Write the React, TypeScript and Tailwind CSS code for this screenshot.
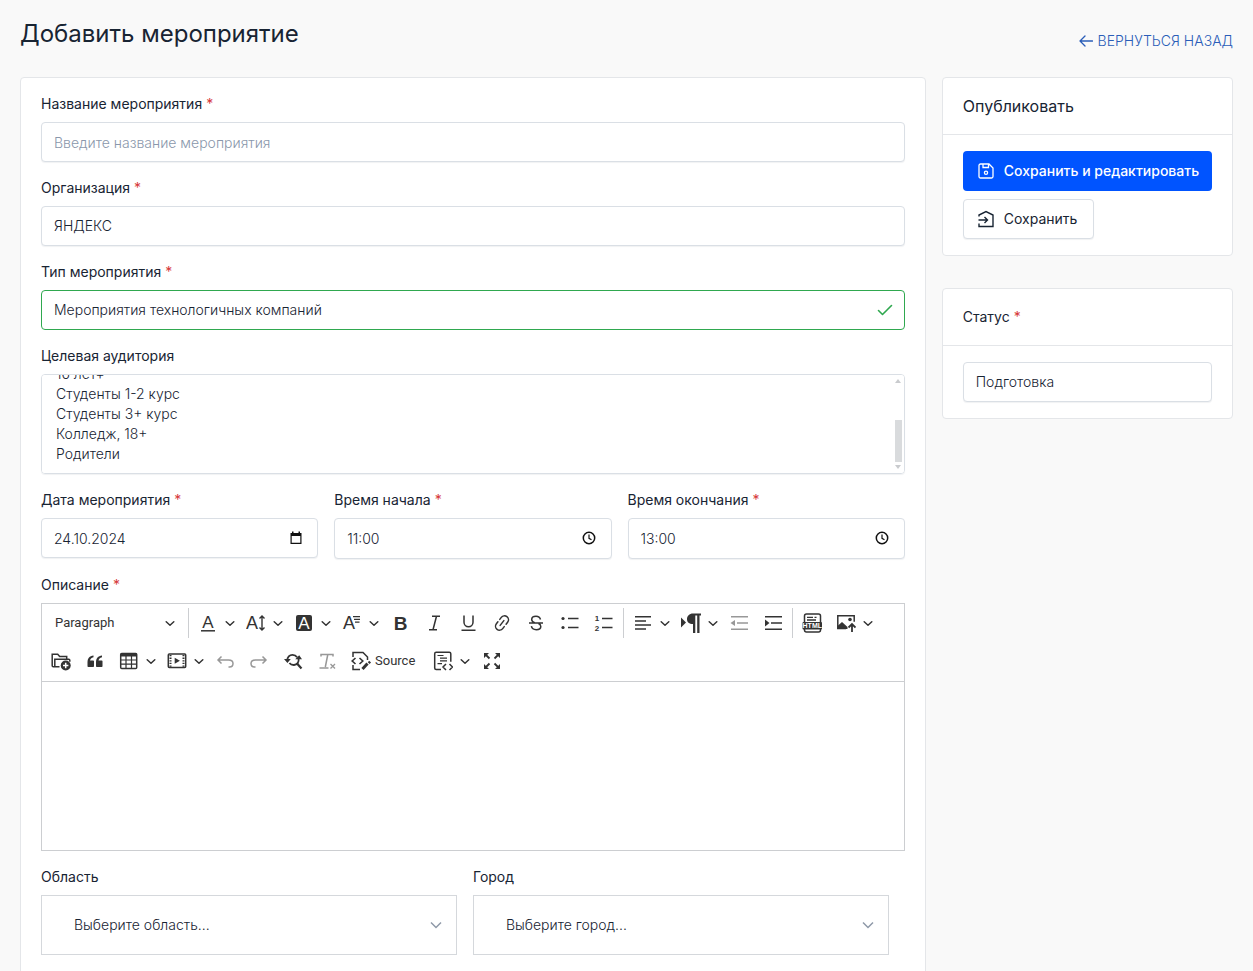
import { useEffect, useRef } from 'react';
import type { ReactNode } from 'react';

const AUDIENCE = [
  '1-4 класс',
  '5-7 класс',
  '8-9 класс',
  '10-11 класс',
  'Колледж, до 18 лет',
  '16 лет+',
  'Студенты 1-2 курс',
  'Студенты 3+ курс',
  'Колледж, 18+',
  'Родители',
];

const field =
  'block w-full appearance-none rounded-[4px] border border-[#dadfe5] bg-white px-3 text-sm font-light text-[#182433] shadow-[0_1px_1px_rgba(24,36,51,0.06)] outline-none placeholder:text-[#8a97ab]';

function Label({ id, required, children }: { id: string; required?: boolean; children: ReactNode }) {
  return (
    <label htmlFor={id} className="mb-2 block text-sm leading-5">
      {children}
      {required && <span className="ml-1 text-[#d63939]">*</span>}
    </label>
  );
}

function Icon({ children }: { children: ReactNode }) {
  return (
    <svg viewBox="0 0 20 20" className="size-5 shrink-0" fill="none" stroke="currentColor" strokeWidth="1.5" aria-hidden>
      {children}
    </svg>
  );
}

function Glyph({ x, y, size, children, fill = 'currentColor', weight = 400 }: { x: number; y: number; size: number; children: string; fill?: string; weight?: number }) {
  return (
    <text x={x} y={y} fontSize={size} fontWeight={weight} fill={fill} stroke="none" textAnchor="middle" fontFamily="Liberation Sans, sans-serif">
      {children}
    </text>
  );
}

function Arrow() {
  return (
    <svg viewBox="0 0 10 10" className="size-[10px] shrink-0" fill="none" stroke="currentColor" strokeWidth="1.5" strokeLinecap="round" strokeLinejoin="round" aria-hidden>
      <path d="M1.2 3.8L5 7.2l3.800-3.400" />
    </svg>
  );
}

function Tool({ name, drop, off, children }: { name: string; drop?: boolean; off?: boolean; children: ReactNode }) {
  return (
    <button
      type="button"
      aria-label={name}
      disabled={off}
      className={`flex h-[30px] items-center gap-0.5 ${drop ? 'w-11' : 'w-[30px]'} ${off ? 'opacity-50' : ''}`}
    >
      <span className="flex w-[30px] shrink-0 justify-center">
        <Icon>{children}</Icon>
      </span>
      {drop && <Arrow />}
    </button>
  );
}

function Divider() {
  return <span className="h-[30px] w-px bg-[#ccced1]" />;
}

function Toolbar() {
  return (
    <div className="flex flex-col gap-2 border-b border-[#ccced1] px-1 pt-1 pb-[5px] text-[#333]">
      <div className="flex gap-1">
        <button type="button" className="flex h-[30px] w-[138px] items-center justify-between px-[9px] font-[Roboto] text-[13px]">
          Paragraph
          <Arrow />
        </button>
        <Divider />
        <Tool name="Font color" drop>
          <Glyph x={10} y={15} size={17}>A</Glyph>
          <path d="M3 17.8h14" />
        </Tool>
        <Tool name="Font size" drop>
          <Glyph x={6} y={16} size={18}>A</Glyph>
          <path d="M16 4v12M13.5 5.5L16 3l2.5 2.5M13.5 14.5L16 17l2.5-2.5" strokeWidth="1.4" />
        </Tool>
        <Tool name="Font background" drop>
          <rect x="2" y="2" width="16" height="16" rx="2" fill="currentColor" stroke="none" />
          <Glyph x={10} y={16} size={17} fill="#fff">A</Glyph>
        </Tool>
        <Tool name="Font family" drop>
          <Glyph x={7} y={16} size={18}>A</Glyph>
          <path d="M11 3.7h7M12 6.4h6M13 9.1h4.5" strokeWidth="1.3" />
        </Tool>
        <Tool name="Bold">
          <Glyph x={10.5} y={17} size={19} weight={700}>B</Glyph>
        </Tool>
        <Tool name="Italic">
          <path d="M8 3.2h8M5 16.8h8M12.5 3.2L9 16.8" />
        </Tool>
        <Tool name="Underline">
          <path d="M6 2.5v6.8a4.5 4.5 0 0 0 9 0V2.500M3.500 17.300h14" />
        </Tool>
        <Tool name="Link">
          <g transform="rotate(-52 10 10)" strokeLinecap="round">
            <path d="M8.5 6H6a4 4 0 0 0 0 8h2.5M11.5 6H14a4 4 0 0 1 0 8h-2.5M7 10h6" />
          </g>
        </Tool>
        <Tool name="Strikethrough">
          <path d="M14.5 6.5C14 4.3 12.5 3.3 10 3.3c-2.700 0-4.300 1.300-4.300 3.200 0 1.700 1.200 2.500 3 3.200M12.500 10.500c1.500.700 2.300 1.500 2.300 3 0 2-1.700 3.200-4.500 3.200-2.700 0-4.500-1.200-4.900-3.500M3 10.100h14" />
        </Tool>
        <Tool name="Bulleted list">
          <path d="M8 5.5h10.500M8 14.500h10.500" />
          <circle cx="3" cy="5.5" r="1.6" fill="currentColor" stroke="none" />
          <circle cx="3" cy="14.5" r="1.6" fill="currentColor" stroke="none" />
        </Tool>
        <Tool name="Numbered list">
          <path d="M8 5.5h10.500M8 14.500h10.500" />
          <Glyph x={3} y={8} size={8} weight={700}>1</Glyph>
          <Glyph x={3} y={18} size={8} weight={700}>2</Glyph>
        </Tool>
        <Divider />
        <Tool name="Text alignment" drop>
          <path d="M2 3.8h16M2 7.9h11M2 12h16M2 16.1h11" />
        </Tool>
        <Tool name="Text direction" drop>
          <path d="M0 4.5l5 5-5 5z" fill="currentColor" stroke="none" />
          <path d="M12 11c-4 0-6-2-6-4.800C6 3 8.300.5 12 .5h8v2h-1.500V20h-2.300V2.500h-1.900V20H12z" fill="currentColor" stroke="none" />
        </Tool>
        <Tool name="Decrease indent" off>
          <path d="M2 3.8h17M8 10h11M2 16.2h17" />
          <path d="M6 7v6l-4.500-3z" fill="currentColor" stroke="none" />
        </Tool>
        <Tool name="Increase indent">
          <path d="M2 3.8h17M8 10h11M2 16.2h17" />
          <path d="M2 6.5v7L6.500 10z" fill="currentColor" stroke="none" />
        </Tool>
        <Divider />
        <Tool name="Insert HTML">
          <rect x="2.5" y="1" width="16" height="18" rx="2" />
          <path d="M5 4.3h6M12.500 4.300h2M5 7h9" strokeWidth="1.3" />
          <rect x="0.5" y="9" width="19.5" height="7.500" rx="1" fill="currentColor" stroke="none" />
          <Glyph x={10.3} y={15.3} size={7} weight={700} fill="#fff">HTML</Glyph>
        </Tool>
        <Tool name="Insert image" drop>
          <path d="M10 15.5H1.800V2.800h16.400v6" />
          <path d="M1.500 16v-3l4.500-4 5.500 5V16z" fill="currentColor" stroke="none" />
          <circle cx="14" cy="6.5" r="1.800" fill="currentColor" stroke="none" />
          <path d="M16 19v-7.500M12.500 14.500L16 11l3.500 3.500" strokeWidth="1.8" />
        </Tool>
      </div>

      <div className="flex gap-1">
        <Tool name="File manager">
          <path d="M8.500 15.800H2.200a1 1 0 0 1-1-1V3.200h5.500l2 2.300h7v2M3.800 15.500V8.200h14a1 1 0 0 1 1 1v1.500" />
          <circle cx="14.700" cy="14.500" r="5" fill="currentColor" stroke="none" />
          <path d="M14.700 11.800v5.400M12 14.500h5.400" stroke="#fff" />
        </Tool>
        <Tool name="Block quote">
          <path
            d="M8.500 4.500v1.800C6.300 7 5.300 8 5 9.500h3.200a.8.8 0 0 1 .8.800v5a.8.8 0 0 1-.8.800H3.300a.8.8 0 0 1-.8-.8V11c0-3.800 2-6 6-6.500zM17 4.500v1.800c-2.200.7-3.200 1.700-3.500 3.200h3.200a.8.8 0 0 1 .8.800v5a.8.8 0 0 1-.8.800h-4.900a.8.8 0 0 1-.8-.8V11c0-3.800 2-6 6-6.500z"
            fill="currentColor"
            stroke="none"
          />
        </Tool>
        <Tool name="Insert table" drop>
          <rect x="1.700" y="2.500" width="16" height="15" rx="1" />
          <path d="M1.700 4h16" strokeWidth="3" />
          <path d="M2 9h15.500M2 13.200h15.500M7 5v12.500M12.500 5v12.500" strokeWidth="1.2" />
        </Tool>
        <Tool name="Insert media" drop>
          <rect x="1.300" y="3" width="17.400" height="13.500" rx="1" />
          <path d="M3.500 4v12M16.500 4v12" strokeWidth="2" strokeDasharray="1.3 1.3" />
          <path d="M7.700 6.700v6l5.200-3z" fill="currentColor" stroke="none" />
        </Tool>
        <Tool name="Undo" off>
          <path d="M6.500 5.500L3 9l3.500 3.500M3 9h10.500c3 0 4.500 1.500 4.500 3.500S16.500 16 14.500 16h-1" />
        </Tool>
        <Tool name="Redo" off>
          <path d="M13.500 5.500L17 9l-3.500 3.500M17 9H6.500C3.500 9 2 10.500 2 12.500S3.500 16 5.500 16h1" />
        </Tool>
        <Tool name="Find and replace">
          <path d="M4.300 9.500C4.300 6 6.500 3.800 9.500 3.800c2 0 3.600.9 4.600 2.400M15.600 7.500c.6 3.800-1.600 6.300-4.600 6.500-2 .1-3.500-.6-4.600-2" strokeWidth="1.800" />
          <path d="M1 8h6.800l-3.400 4zM12.200 8.300h6.800l-2.800-4z" fill="currentColor" stroke="none" />
          <path d="M14 12.500l4.500 5" strokeWidth="2.200" />
        </Tool>
        <Tool name="Remove format" off>
          <path d="M4 5.500v-2h12v2M10.800 3.500L8.300 16M2.500 17h9" />
          <path d="M13.500 13l4.500 4.500M18 13l-4.500 4.500" strokeWidth="1.3" />
        </Tool>
        <button type="button" className="flex h-[30px] w-[78px] items-center gap-1 pl-[5px] font-[Roboto] text-[13px]">
          <Icon>
            <path d="M2 6V1.500h10L16.500 6v3M2 14v4.500h7" />
            <path d="M4.500 7L1.200 10l3.300 3M8.500 7l3.300 3-3.300 3" strokeWidth="1.6" />
            <path d="M11.500 18l5-5.500" strokeWidth="3" />
            <path d="M17.500 10.500l1.800 1.800" strokeWidth="2" />
          </Icon>
          Source
        </button>
        <Tool name="Insert template" drop>
          <path d="M8 18.500H3.200a1.500 1.500 0 0 1-1.500-1.500V2.700a1.500 1.500 0 0 1 1.500-1.500h13.100a1.500 1.500 0 0 1 1.500 1.500v8" />
          <path d="M4.500 4.500h6M7 7.200h7M7 9.900h7M4.500 12.600h4.500" strokeWidth="1.2" />
          <path d="M13 13l-3 3 3 3M16.500 13l3 3-3 3" />
        </Tool>
        <Tool name="Fullscreen">
          <path d="M3 2h5L3 7zM19 2v5l-5-5zM3 18v-5l5 5zM19 18h-5l5-5z" fill="currentColor" stroke="none" />
          <path d="M4.500 3.500l4 4M17.500 3.500l-4 4M4.500 16.500l4-4M17.500 16.500l-4-4" strokeWidth="1.8" />
        </Tool>
      </div>
    </div>
  );
}

function AudienceSelect() {
  const ref = useRef<HTMLSelectElement>(null);

  useEffect(() => {
    if (ref.current) ref.current.scrollTop = ref.current.scrollHeight;
  }, []);

  return (
    <div className="relative">
      <select id="audience" ref={ref} multiple className={`${field} h-[100px] overflow-y-auto py-2 [scrollbar-width:none]`}>
        {AUDIENCE.map((a) => (
          <option key={a} className="h-5 px-0.5 py-0 leading-5 font-light">
            {a}
          </option>
        ))}
      </select>
      <div className="pointer-events-none absolute inset-y-1 right-[3px] flex w-[7px] flex-col items-center text-[#c9cbce]">
        <svg viewBox="0 0 6 4" className="mt-px h-1 w-[6px]" fill="currentColor" aria-hidden>
          <path d="M3 0l3 4H0z" />
        </svg>
        <span className="mt-auto mb-[3px] h-[42px] w-full bg-[#d9dbdd]" />
        <svg viewBox="0 0 6 4" className="mb-px h-1 w-[6px]" fill="currentColor" aria-hidden>
          <path d="M3 4l3-4H0z" />
        </svg>
      </div>
    </div>
  );
}

function TimeField({ id, label, value }: { id: string; label: string; value: string }) {
  return (
    <div>
      <Label id={id} required>{label}</Label>
      <div className="relative">
        <input id={id} defaultValue={value} className={`${field} h-[41px]`} />
        <svg viewBox="0 0 14 14" className="pointer-events-none absolute top-[13px] right-4 size-[14px]" fill="none" stroke="#111" strokeWidth="1.5" aria-hidden>
          <circle cx="7" cy="7" r="5.7" />
          <path d="M7 3.500v3.800l2.500 1.500" strokeWidth="1.2" />
        </svg>
      </div>
    </div>
  );
}

function PlaceSelect({ id, label, text }: { id: string; label: string; text: string }) {
  return (
    <div>
      <Label id={id}>{label}</Label>
      <div className="relative">
        <select id={id} className="block h-[60px] w-full appearance-none border border-[#d5d8dc] bg-white px-8 text-sm font-light outline-none">
          <option>{text}</option>
        </select>
        <svg viewBox="0 0 12 8" className="pointer-events-none absolute top-[26px] right-[15px] h-2 w-3" fill="none" stroke="#8f99a8" strokeWidth="1.5" aria-hidden>
          <path d="M1 1.500l5 5 5-5" />
        </svg>
      </div>
    </div>
  );
}

export default function App() {
  return (
    <div className="h-screen overflow-hidden bg-[#f9f9f9] px-5 font-[Inter,sans-serif] text-[#182433]">
      <header className="flex h-[77px] items-start justify-between">
        <h1 className="pt-[18px] text-2xl leading-8">Добавить мероприятие</h1>
        <a href="#" className="flex items-center gap-[5px] pt-[31px] text-sm leading-5 font-light text-[#2a5db8]">
          <svg viewBox="0 0 14 14" className="size-[14px]" fill="none" stroke="currentColor" strokeWidth="1.3" strokeLinecap="round" strokeLinejoin="round" aria-hidden>
            <path d="M13.500 7H1M6 2L1 7l5 5" />
          </svg>
          ВЕРНУТЬСЯ НАЗАД
        </a>
      </header>

      <form className="grid grid-cols-12 items-start gap-4">
        <main className="col-span-9 flex flex-col gap-4 rounded-[4px] border border-[#e4e6e9] bg-white px-5 py-4">
          <div>
            <Label id="name" required>Название мероприятия</Label>
            <input id="name" placeholder="Введите название мероприятия" className={`${field} h-10`} />
          </div>
          <div>
            <Label id="org" required>Организация</Label>
            <select id="org" className={`${field} h-10`}>
              <option>ЯНДЕКС</option>
            </select>
          </div>
          <div>
            <Label id="type" required>Тип мероприятия</Label>
            <div className="relative">
              <select id="type" className="block h-10 w-full appearance-none rounded-[4px] border border-[#2fa84f] bg-white px-3 text-sm font-light outline-none">
                <option>Мероприятия технологичных компаний</option>
              </select>
              <svg viewBox="0 0 16 12" className="pointer-events-none absolute top-[14px] right-3 h-3 w-4" fill="none" stroke="#2fa84f" strokeWidth="1.6" strokeLinecap="round" strokeLinejoin="round" aria-hidden>
                <path d="M1.500 6.500l4 4 9-9" />
              </svg>
            </div>
          </div>
          <div>
            <Label id="audience">Целевая аудитория</Label>
            <AudienceSelect />
          </div>

          <div className="grid grid-cols-3 gap-4">
            <div>
              <Label id="date" required>Дата мероприятия</Label>
              <div className="relative">
                <input id="date" defaultValue="24.10.2024" className={`${field} h-10`} />
                <svg viewBox="0 0 14 14" className="pointer-events-none absolute top-[13px] right-[15px] size-[14px]" fill="#111" aria-hidden>
                  <path d="M3 .5h1.500V2h5V.5H11V2h1.500v11h-11V2H3zM2.700 5v6.800h8.600V5z" fillRule="evenodd" />
                </svg>
              </div>
            </div>
            <TimeField id="start" label="Время начала" value="11:00" />
            <TimeField id="end" label="Время окончания" value="13:00" />
          </div>

          <div>
            <Label id="description" required>Описание</Label>
            <div className="border border-[#ccced1]">
              <Toolbar />
              <textarea id="description" className="block h-[168px] w-full resize-none px-3 py-2 text-sm outline-none" />
            </div>
          </div>

          <div className="grid grid-cols-2 gap-4 pr-4">
            <PlaceSelect id="region" label="Область" text="Выберите область..." />
            <PlaceSelect id="city" label="Город" text="Выберите город..." />
          </div>
          <div className="h-8" />
        </main>

        <aside className="col-span-3 flex flex-col gap-8">
          <section className="rounded-[4px] border border-[#e4e6e9] bg-white">
            <h2 className="border-b border-[#e4e6e9] px-5 py-4 text-base leading-6">Опубликовать</h2>
            <div className="flex flex-col items-start gap-2 px-5 py-4">
              <button type="submit" className="flex h-10 items-center gap-2 rounded-[4px] bg-[#0054ff] px-[13px] text-sm font-medium whitespace-nowrap text-white">
                <Icon>
                  <path d="M4.500 3h8.500l4 4v8.500a1.500 1.500 0 0 1-1.500 1.500h-11A1.500 1.500 0 0 1 3 15.500v-11A1.500 1.500 0 0 1 4.500 3zM7 3v3.500h5.500V3" strokeWidth="1.3" />
                  <circle cx="10" cy="11.800" r="1.600" strokeWidth="1.3" />
                </Icon>
                Сохранить и редактировать
              </button>
              <button type="submit" className="flex h-10 items-center gap-2 rounded-[4px] border border-[#dadfe5] bg-white pr-4 pl-3 text-sm shadow-[0_1px_1px_rgba(24,36,51,0.06)]">
                <Icon>
                  <path d="M3 7.500V6l7-3.500L17 6v11.500H3V14.500M2.500 11h9M8.500 8l3 3-3 3" strokeWidth="1.4" />
                </Icon>
                Сохранить
              </button>
            </div>
          </section>

          <section className="rounded-[4px] border border-[#e4e6e9] bg-white">
            <div className="border-b border-[#e4e6e9] px-5 pt-[18px] pb-[10px]">
              <Label id="status" required>Статус</Label>
            </div>
            <div className="px-5 py-4">
              <select id="status" className={`${field} h-10`}>
                <option>Подготовка</option>
              </select>
            </div>
          </section>
        </aside>
      </form>
    </div>
  );
}
